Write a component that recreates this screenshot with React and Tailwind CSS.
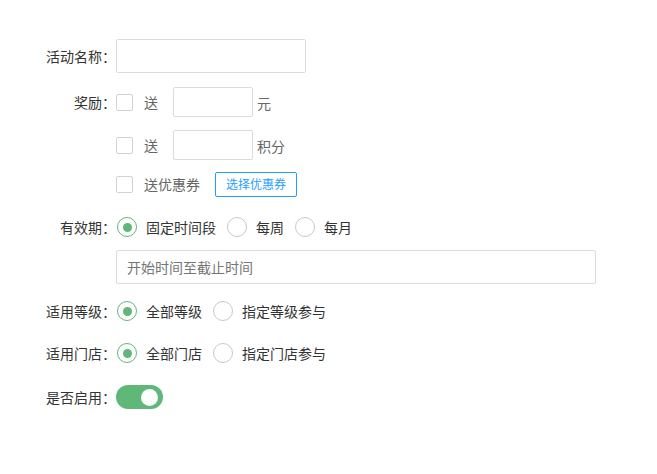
import React from "react";

const font = { fontFamily: '"Noto Sans CJK SC", "Noto Sans", sans-serif' };

function Label({ children }) {
  return (
    <div className="w-[116px] shrink-0 text-right text-[14px] text-[#333]">{children}</div>
  );
}

function Checkbox() {
  return <span className="inline-block h-[17px] w-[17px] shrink-0 rounded-[2px] border border-[#d2d2d2] bg-white" />;
}

function Radio({ checked, label }) {
  return (
    <div className="flex items-center">
      {checked ? (
        <span className="flex h-[20px] w-[20px] items-center justify-center rounded-full border-[1.5px] border-[#5fb878] bg-white">
          <span className="h-[9px] w-[9px] rounded-full bg-[#5fb878]" />
        </span>
      ) : (
        <span className="h-[20px] w-[20px] rounded-full border-[1.5px] border-[#c9c9c9] bg-white" />
      )}
      <span className="ml-[9px] text-[14px] text-[#333]">{label}</span>
    </div>
  );
}

export default function App() {
  return (
    <div className="min-h-[474px] w-[657px] bg-white pt-[39px]" style={font}>
      <div className="flex h-[34px] items-center">
        <Label>活动名称：</Label>
        <div className="h-[34px] w-[190px] rounded-[2px] border border-[#dcdcdc]" />
      </div>

      <div className="mt-[14px] flex h-[30px] items-center">
        <Label>奖励：</Label>
        <Checkbox />
        <span className="ml-[11px] text-[14px] text-[#666]">送</span>
        <div className="ml-[15px] h-[30px] w-[80px] rounded-[2px] border border-[#dcdcdc]" />
        <span className="ml-[4px] mt-[2px] text-[14px] text-[#666]">元</span>
      </div>

      <div className="mt-[13px] flex h-[30px] items-center">
        <div className="w-[116px] shrink-0" />
        <Checkbox />
        <span className="ml-[11px] text-[14px] text-[#666]">送</span>
        <div className="ml-[15px] h-[30px] w-[80px] rounded-[2px] border border-[#dcdcdc]" />
        <span className="ml-[4px] mt-[2px] text-[14px] text-[#666]">积分</span>
      </div>

      <div className="mt-[11px] flex h-[26px] items-center">
        <div className="w-[116px] shrink-0" />
        <Checkbox />
        <span className="ml-[11px] text-[14px] text-[#666]">送优惠券</span>
        <button className="ml-[15px] flex h-[25px] w-[82px] items-center justify-center rounded-[2px] border border-[#1e9fff] bg-white text-[12px] text-[#1e9fff]">
          选择优惠券
        </button>
      </div>

      <div className="mt-[15px] flex h-[30px] items-center">
        <Label>有效期：</Label>
        <div className="flex items-center gap-[11px] pl-[1px]">
          <Radio checked label="固定时间段" />
          <Radio label="每周" />
          <Radio label="每月" />
        </div>
      </div>

      <div className="mt-[8px] flex h-[34px] items-center">
        <div className="w-[116px] shrink-0" />
        <div className="flex h-[34px] w-[480px] items-center rounded-[2px] border border-[#dcdcdc] pl-[10px] text-[14px] text-[#757575]">
          开始时间至截止时间
        </div>
      </div>

      <div className="mt-[12px] flex h-[30px] items-center">
        <Label>适用等级：</Label>
        <div className="flex items-center gap-[11px] pl-[1px]">
          <Radio checked label="全部等级" />
          <Radio label="指定等级参与" />
        </div>
      </div>

      <div className="mt-[12px] flex h-[30px] items-center">
        <Label>适用门店：</Label>
        <div className="flex items-center gap-[11px] pl-[1px]">
          <Radio checked label="全部门店" />
          <Radio label="指定门店参与" />
        </div>
      </div>

      <div className="mt-[14px] flex h-[30px] items-center">
        <Label>是否启用：</Label>
        <div className="flex h-[24px] w-[47px] items-center justify-end rounded-full bg-[#5fb878] pr-[5px]">
          <span className="h-[17px] w-[17px] rounded-full bg-white" />
        </div>
      </div>
    </div>
  );
}
